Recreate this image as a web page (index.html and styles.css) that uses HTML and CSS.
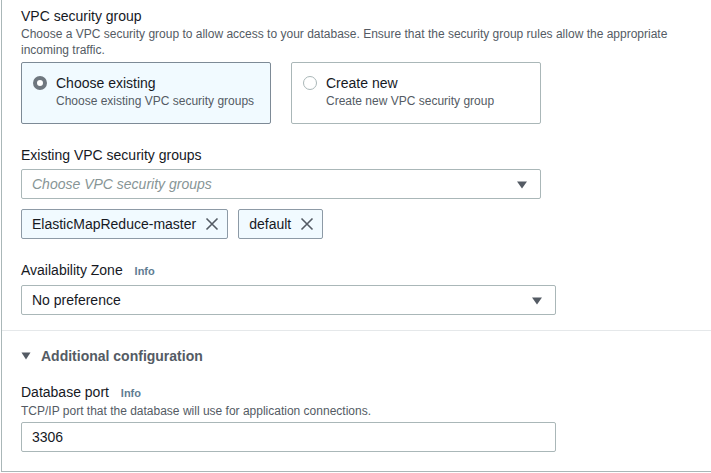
FILE: index.html
```html
<!DOCTYPE html>
<html lang="en">
<head>
<meta charset="utf-8">
<title>VPC security group</title>
<link rel="stylesheet" href="styles.css">
</head>
<body>
<div class="panel">
  <section class="section top">
    <div class="title">VPC security group</div>
    <div class="desc">Choose a VPC security group to allow access to your database. Ensure that the security group rules allow the appropriate incoming traffic.</div>
    <div class="tiles">
      <div class="tile selected">
        <span class="radio checked"></span>
        <div class="tile-text">
          <div class="tile-title">Choose existing</div>
          <div class="tile-sub">Choose existing VPC security groups</div>
        </div>
      </div>
      <div class="tile">
        <span class="radio"></span>
        <div class="tile-text">
          <div class="tile-title">Create new</div>
          <div class="tile-sub">Create new VPC security group</div>
        </div>
      </div>
    </div>

    <div class="label lbl-existing">Existing VPC security groups</div>
    <div class="select narrow">
      <span class="placeholder">Choose VPC security groups</span>
      <svg class="caret" width="12" height="8" viewBox="0 0 12 8"><path d="M1 0.5h10L6 7.5z" fill="#545b64"/></svg>
    </div>
    <div class="tokens">
      <div class="token"><span>ElasticMapReduce-master</span>
        <svg width="14" height="14" viewBox="0 0 14 14"><path d="M1.5 1.5l11 11M12.5 1.5l-11 11" stroke="#545b64" stroke-width="1.6" fill="none"/></svg>
      </div>
      <div class="token"><span>default</span>
        <svg width="14" height="14" viewBox="0 0 14 14"><path d="M1.5 1.5l11 11M12.5 1.5l-11 11" stroke="#545b64" stroke-width="1.6" fill="none"/></svg>
      </div>
    </div>

    <div class="label lbl-az">Availability Zone <span class="info">Info</span></div>
    <div class="select wide">
      <span class="value">No preference</span>
      <svg class="caret" width="12" height="8" viewBox="0 0 12 8"><path d="M1 0.5h10L6 7.5z" fill="#545b64"/></svg>
    </div>
  </section>

  <section class="section bottom">
    <div class="expander">
      <svg width="10" height="8" viewBox="0 0 10 8"><path d="M0.5 0.5h9L5 7.5z" fill="#545b64"/></svg>
      <span>Additional configuration</span>
    </div>
    <div class="label lbl-port">Database port <span class="info">Info</span></div>
    <div class="desc small">TCP/IP port that the database will use for application connections.</div>
    <div class="input wide"><span class="value">3306</span></div>
  </section>
</div>
</body>
</html>
```

FILE: styles.css
```css
* { box-sizing: border-box; }
html, body { margin: 0; padding: 0; background: #ffffff; }
body {
  font-family: "Liberation Sans", Arial, sans-serif;
  color: #16191f;
  width: 711px;
  height: 473px;
  overflow: hidden;
}
.panel {
  margin-left: 1px;
  height: 472px;
  border-left: 1px solid #aab7b8;
  border-bottom: 1px solid #aab7b8;
}
.section { padding-left: 19px; }
.top {
  padding-top: 6px;
  padding-bottom: 15px;
  border-bottom: 1px solid #e5e8ea;
}
.title { font-size: 14px; line-height: 20px; }
.desc {
  font-size: 12px;
  line-height: 16px;
  color: #545b64;
  width: 670px;
}
.tiles { display: flex; gap: 20px; margin-top: 4px; }
.tile {
  width: 250px;
  height: 62px;
  border: 1px solid #aab7b8;
  border-radius: 2px;
  display: flex;
  align-items: flex-start;
  padding: 10px 12px 10px 11px;
  gap: 9px;
}
.tile.selected {
  background: #f1faff;
  border-color: #7d8a96;
}
.radio {
  width: 14px;
  height: 14px;
  border-radius: 50%;
  border: 1px solid #aab7b8;
  background: #fff;
  margin-top: 3px;
  flex: none;
}
.radio.checked {
  border: 4px solid #6f777f;
  background: #fff;
}
.tile-title { font-size: 14px; line-height: 20px; }
.tile-sub { font-size: 12px; line-height: 16px; color: #545b64; }
.label { font-size: 14px; line-height: 20px; }
.lbl-existing { margin-top: 21px; }
.lbl-az { margin-top: 21px; }
.info {
  font-size: 11px;
  font-weight: bold;
  color: #5f7d93;
  margin-left: 8px;
}
.select, .input {
  height: 30px;
  border: 1px solid #aab7b8;
  border-radius: 2px;
  display: flex;
  align-items: center;
  justify-content: space-between;
  padding: 0 12px 0 10px;
  font-size: 14px;
}
.narrow { width: 520px; margin-top: 4px; }
.wide { width: 535px; }
.lbl-az + .select { margin-top: 4px; }
.placeholder { font-style: italic; color: #879596; }
.caret { margin-top: 1px; }
.tokens { display: flex; gap: 10px; margin-top: 10px; }
.token {
  height: 30px;
  display: flex;
  align-items: center;
  gap: 9px;
  padding: 0 8px 0 10px;
  border: 1px solid #8d9aa6;
  border-radius: 2px;
  background: #f1faff;
  font-size: 14px;
}
.bottom { padding-top: 15px; }
.expander {
  display: flex;
  align-items: center;
  gap: 10px;
  font-size: 14px;
  font-weight: bold;
  color: #545b64;
  line-height: 20px;
}
.lbl-port { margin-top: 16px; }
.desc.small { line-height: 16px; }
.input { margin-top: 3px; }
```
